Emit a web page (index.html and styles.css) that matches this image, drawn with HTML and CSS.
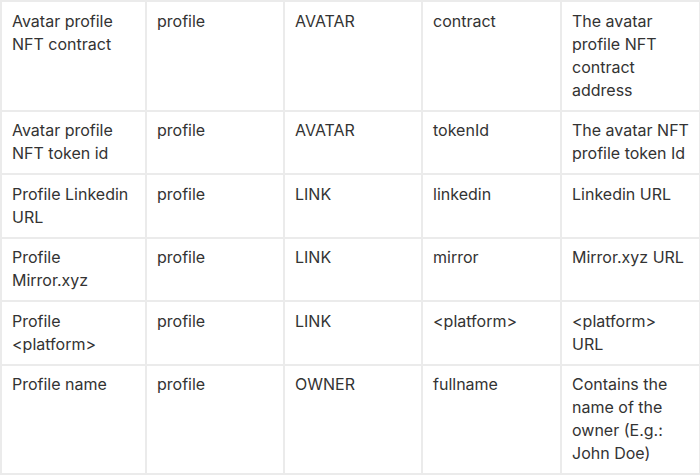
FILE: index.html
```html
<!DOCTYPE html>
<html>
<head>
<meta charset="utf-8">
<link rel="stylesheet" href="styles.css">
</head>
<body>
<table class="data">
  <colgroup>
    <col class="c1"><col class="c2"><col class="c3"><col class="c4"><col class="c5">
  </colgroup>
  <tbody>
    <tr><td>Avatar profile NFT contract</td><td>profile</td><td>AVATAR</td><td>contract</td><td>The avatar profile NFT contract address</td></tr>
    <tr><td>Avatar profile NFT token id</td><td>profile</td><td>AVATAR</td><td>tokenId</td><td>The avatar NFT profile token Id</td></tr>
    <tr><td>Profile Linkedin URL</td><td>profile</td><td>LINK</td><td>linkedin</td><td>Linkedin URL</td></tr>
    <tr><td>Profile Mirror.xyz</td><td>profile</td><td>LINK</td><td>mirror</td><td>Mirror.xyz URL</td></tr>
    <tr><td>Profile &lt;platform&gt;</td><td>profile</td><td>LINK</td><td>&lt;platform&gt;</td><td>&lt;platform&gt; URL</td></tr>
    <tr><td>Profile name</td><td>profile</td><td>OWNER</td><td>fullname</td><td>Contains the name of the owner (E.g.: John Doe)</td></tr>
  </tbody>
</table>
</body>
</html>
```
FILE: styles.css
```css
html, body {
  margin: 0;
  padding: 0;
  background: #ffffff;
}
.data {
  border-collapse: collapse;
  table-layout: fixed;
  width: 699px;
  font-family: Inter, "Liberation Sans", Arial, sans-serif;
  font-size: 16px;
  line-height: 23px;
  color: #333333;
}
.data td {
  border: 2px solid #ebebeb;
  padding: 7.5px 10px 8px;
  vertical-align: top;
  text-align: left;
}
.c1 { width: 145px; }
.c2 { width: 138px; }
.c3 { width: 138px; }
.c4 { width: 139px; }
.c5 { width: 139px; }
```
